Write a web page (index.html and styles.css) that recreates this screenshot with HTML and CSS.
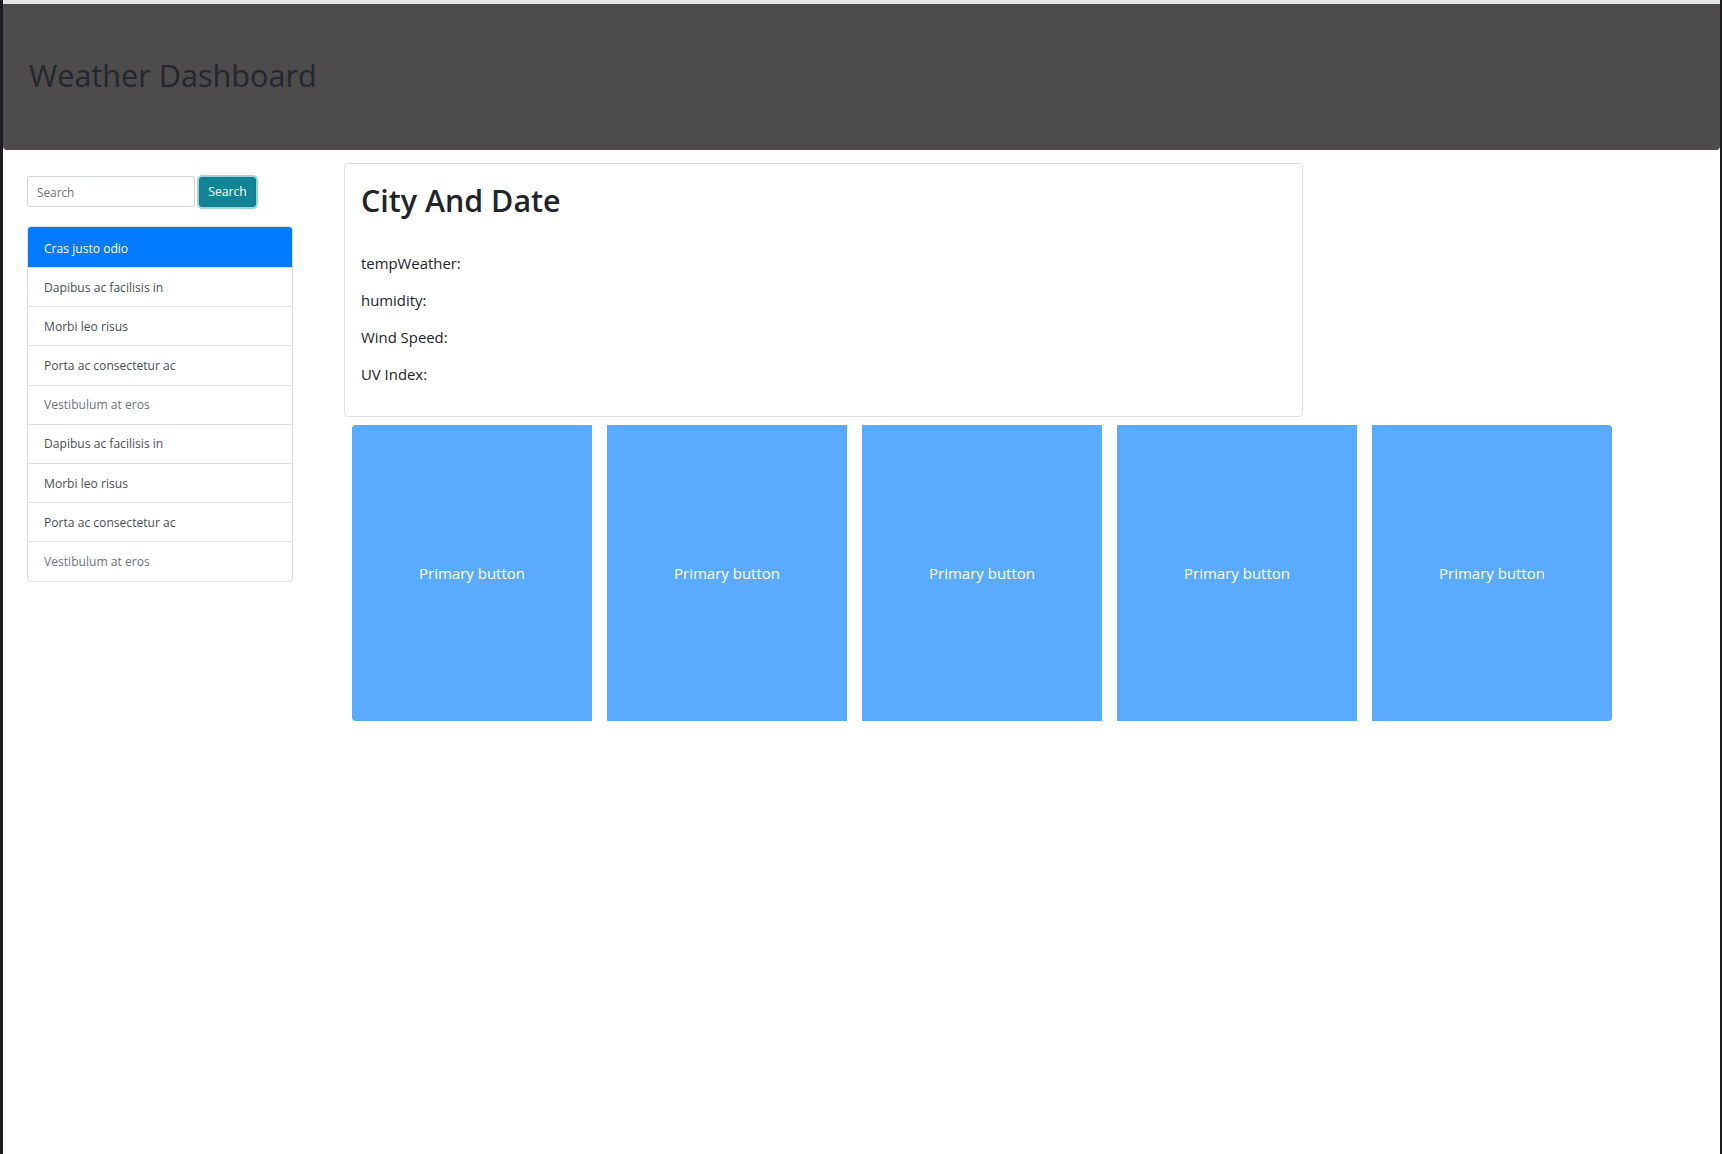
FILE: index.html
```html
<!DOCTYPE html>
<html lang="en">
<head>
<meta charset="utf-8">
<title>Weather Dashboard</title>
<link rel="stylesheet" href="styles.css">
</head>
<body>
<div class="window">
  <header class="jumbo">
    <h1 class="brand">Weather Dashboard</h1>
  </header>
  <main class="layout">
    <aside class="sidebar">
      <form class="search">
        <input class="search-input" type="text" placeholder="Search">
        <button class="search-btn" type="button">Search</button>
      </form>
      <ul class="list">
        <li class="item active">Cras justo odio</li>
        <li class="item">Dapibus ac facilisis in</li>
        <li class="item">Morbi leo risus</li>
        <li class="item">Porta ac consectetur ac</li>
        <li class="item disabled">Vestibulum at eros</li>
        <li class="item">Dapibus ac facilisis in</li>
        <li class="item">Morbi leo risus</li>
        <li class="item">Porta ac consectetur ac</li>
        <li class="item disabled">Vestibulum at eros</li>
      </ul>
    </aside>
    <section class="content">
      <div class="card">
        <h1 class="card-title">City And Date</h1>
        <p class="stat">tempWeather:</p>
        <p class="stat">humidity:</p>
        <p class="stat">Wind Speed:</p>
        <p class="stat">UV Index:</p>
      </div>
      <div class="forecast">
        <button class="day first" type="button" disabled>Primary button</button>
        <button class="day" type="button" disabled>Primary button</button>
        <button class="day" type="button" disabled>Primary button</button>
        <button class="day" type="button" disabled>Primary button</button>
        <button class="day last" type="button" disabled>Primary button</button>
      </div>
    </section>
  </main>
</div>
</body>
</html>
```

FILE: styles.css
```css
* { box-sizing: border-box; }
html, body { margin: 0; height: 100%; }
body {
  background: #1c1b1f;
  font-family: "Open Sans", "Noto Sans", sans-serif;
  color: #212529;
}
.window {
  margin: 0 2px 0 3px;
  min-height: 100%;
  background: #ffffff;
  border-top: 4px solid #e4e4e4;
}
.jumbo {
  height: 146px;
  background: #4d4b4c;
  border-radius: 0 0 4px 4px;
  display: flex;
  align-items: center;
  padding: 0 0 4px 26px;
}
.brand {
  margin: 0;
  font-size: 30.6px;
  font-weight: 500;
  color: #25272b;
  letter-spacing: 0;
}
.layout {
  display: flex;
  align-items: flex-start;
  padding: 0 0 0 24px;
}
.sidebar {
  width: 266px;
  margin-top: 25px;
}
.search {
  display: flex;
  align-items: center;
  height: 33px;
}
.search-input {
  width: 168px;
  height: 31px;
  border: 1px solid #ced4da;
  border-radius: 3px;
  padding: 0 9px;
  font-family: inherit;
  font-size: 11.8px;
  color: #495057;
}
.search-input::placeholder { color: #6c757d; }
.search-btn {
  margin-left: 4px;
  height: 30px;
  width: 57px;
  border: 1px solid #117a8b;
  border-radius: 3px;
  background: #138496;
  color: #ffffff;
  font-family: inherit;
  font-size: 12.2px;
  padding: 0;
  box-shadow: 0 0 0 2px rgba(58, 176, 195, 0.5);
}
.list {
  list-style: none;
  margin: 18px 0 0 0;
  padding: 0;
  border: 1px solid #dfdfdf;
  border-radius: 4px;
  overflow: hidden;
}
.item {
  height: 39.2px;
  display: flex;
  align-items: center;
  padding: 0 16px 0 16px;
  font-size: 12.1px;
  color: #495057;
  border-top: 1px solid #dfdfdf;
}
.item:first-child { border-top: none; }
.item.active {
  background: #007bff;
  color: #ffffff;
  height: 40px;
  padding-top: 2px;
}
.item.disabled { color: #6c757d; }
.content {
  margin-left: 51px;
  margin-top: 13px;
}
.card {
  width: 959px;
  height: 254px;
  border: 1px solid #dfdfdf;
  border-radius: 4px;
  padding: 17px 16px 0 16px;
}
.card-title {
  margin: 0 0 32px 0;
  font-size: 30.4px;
  line-height: 40px;
  font-weight: 600;
  color: #212529;
}
.stat {
  margin: 0;
  height: 37px;
  font-size: 14.9px;
  line-height: 21px;
  color: #212529;
}
.forecast {
  display: flex;
  gap: 15px;
  margin: 8px 0 0 8px;
}
.day {
  width: 240px;
  height: 296px;
  border: none;
  background: #5aabfe;
  color: #ffffff;
  font-family: inherit;
  font-size: 15px;
  padding: 0;
  border-radius: 0;
}
.day.first { border-radius: 4px 0 0 4px; }
.day.last { border-radius: 0 4px 4px 0; }
```
